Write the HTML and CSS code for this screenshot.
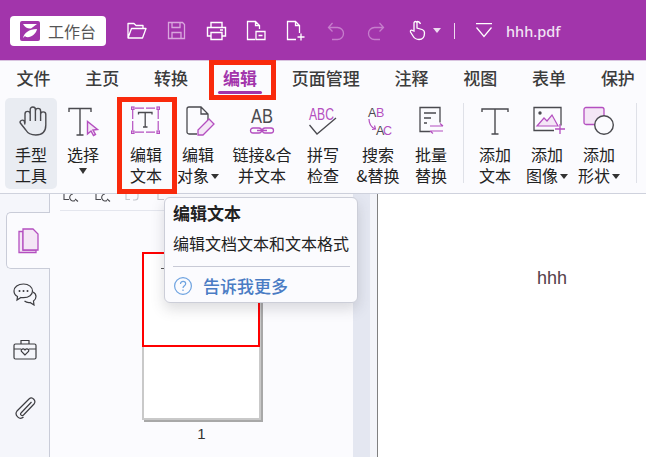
FILE: index.html
```html
<!DOCTYPE html>
<html lang="zh-CN">
<head>
    <meta charset="UTF-8">
    <title>hhh.pdf</title>
    <link rel="stylesheet" href="styles.css">
</head>
<body>
    <header class="titlebar">
        <div class="workbench">
            <svg class="logo" width="20" height="20" viewBox="0 0 20 20"><rect width="20" height="20" rx="2" fill="#a235ab"/><path d="M3 3h14l-6 4.500C8 8 5 6.500 3 3zM3 17c1-5 6-9 14-9-1 5-6 9-11 8l-1-1z" fill="#fff"/></svg>
            <span>工作台</span>
        </div>
        <div class="quick">
            <svg class="q-open" width="21" height="19" viewBox="0 0 21 19" fill="none" stroke="#fff" stroke-width="1.3"><path d="M2 17V2.500h6l2 2h7v3M2 17h14.500L20 7.500H5.500L2 17z" stroke-linejoin="round"/></svg>
            <svg class="q-save" width="19" height="19" viewBox="0 0 19 19" fill="none" stroke="#d9a6dd" stroke-width="1.3"><path d="M1.500 1.500h14l2 2v14h-16zM5 1.500v5h8v-5M5 17.500v-6h9v6"/></svg>
            <svg class="q-print" width="21" height="20" viewBox="0 0 21 20" fill="none" stroke="#fff" stroke-width="1.4"><path d="M5 6V1.500h11V6M5 15H1.500V6.500h18V15H16M5 11.500h11v7H5zM14 9h3"/></svg>
            <svg class="q-export" width="20" height="21" viewBox="0 0 20 21" fill="none" stroke="#fff" stroke-width="1.3"><path d="M9 19.500H1.500v-18h8l4 4V9M9.500 1.500v4h4M10 11.500h9v8h-9zM12.500 15.500h4"/></svg>
            <svg class="q-new" width="20" height="21" viewBox="0 0 20 21" fill="none" stroke="#fff" stroke-width="1.3"><path d="M10 19.500H1.500v-18h8l4 4V13M9.500 1.500v4h4M15 13.500v7M11.500 17h7"/></svg>
            <svg class="q-undo" width="18" height="20" viewBox="0 0 18 20" fill="none" stroke="#c67ecc" stroke-width="1.3"><path d="M1.500 6.500h9a6 6 0 0 1 0 12H5M5.500 2 1.500 6.500l4 4"/></svg>
            <svg class="q-redo" width="18" height="20" viewBox="0 0 18 20" fill="none" stroke="#c67ecc" stroke-width="1.3"><path d="M16.500 6.500h-9a6 6 0 0 0 0 12H13M12.500 2l4 4.500-4 4"/></svg>
            <svg class="q-hand" width="18" height="21" viewBox="0 0 18 21" fill="none" stroke="#fff" stroke-width="1.3"><path d="M6 11V3a1.500 1.500 0 0 1 3 0v5l5 1.500c2 .7 2.500 1.500 2.500 3.500 0 4-2 6.500-5.500 6.500-3 0-4.500-1-6-3.500l-2.500-4c-.5-1.500 1-2.500 2-1.500zM9 1.500c2 0 3 1 3.500 2.500"/></svg>
            <span class="caret caret-light"></span>
            <span class="q-sep"></span>
            <svg class="q-more" width="16" height="15" viewBox="0 0 16 15" fill="none" stroke="#fff" stroke-width="1.2"><path d="M0 .7h16M.5 4.500 8 13.500l7.500-9"/></svg>
            <span class="filename">hhh.pdf</span>
        </div>
    </header>

    <nav class="tabs">
        <span>文件</span>
        <span>主页</span>
        <span>转换</span>
        <span class="active">编辑</span>
        <span>页面管理</span>
        <span>注释</span>
        <span>视图</span>
        <span>表单</span>
        <span>保护</span>
    </nav>

    <section class="ribbon">
        <div class="tool tool-hand">
            <svg width="29" height="30" viewBox="0 0 29 30" fill="none" stroke="#4a4a4f" stroke-width="1.400" stroke-linejoin="round"><path d="M8 17V8a2.600 2.600 0 0 1 5.200 0v7M13.200 15V3.600a2.600 2.600 0 0 1 5.200 0V15M18.400 15V5a2.600 2.600 0 0 1 5.200 0v10M23.600 15V8.500a2.600 2.600 0 0 1 5.200 0V19c0 6.500-3.500 10-10 10-5.500 0-8-1.500-10-5l-5.500-7c-1-2 2-4 4-2L8 18.500"/></svg>
            <span>手型<br>工具</span>
        </div>
        <div class="tool">
            <svg width="30" height="30" viewBox="0 0 30 30" fill="none" stroke="#4a4a4f" stroke-width="1.4"><path d="M1 6V2.500h22V6M12 2.500V29M8.500 29h7"/><path d="M19.500 15.500V28l3.500-3 2.500 4.500 2-1-2.500-4.500 4.500-.5z" stroke="#b44fc0" fill="#f4e6f6"/></svg>
            <span>选择</span>
            <span class="caret"></span>
        </div>
        <div class="tool tool-text">
            <svg width="30" height="30" viewBox="0 0 30 30" fill="none"><path d="M4 2.200h21M4 26.200h21M1.700 4v20.500M27.200 4v20.500" stroke="#b44fc0" stroke-width="1.200" stroke-dasharray="9 2"/><path d="M7.500 8.500V6.500h13.500v2M14.200 6.500V21M12 21h4.500" stroke="#4a4a4f" stroke-width="1.300"/><g fill="#fbeffc" stroke="#b44fc0" stroke-width="1.200"><rect x=".6" y="1" width="2.400" height="2.400"/><rect x="26" y="1" width="2.400" height="2.400"/><rect x=".6" y="25" width="2.400" height="2.400"/><rect x="26" y="25" width="2.400" height="2.400"/></g></svg>
            <span>编辑<br>文本</span>
        </div>
        <div class="tool tool-object">
            <svg class="ico-shift" width="30" height="30" viewBox="0 0 30 30" fill="none" stroke="#4a4a4f" stroke-width="1.300"><path d="M12 28H4a2 2 0 0 1-2-2V3a2 2 0 0 1 2-2h12l7 7v6M16 1v7h7"/><path d="M13 29v-5l11-11 5 5-11 11z" stroke="#b44fc0" fill="#f4e6f6"/></svg>
            <span>编辑<br><span class="with-caret">对象</span></span>
        </div>
        <div class="tool tool-link">
            <svg width="26" height="30" viewBox="0 0 26 30" fill="none"><text x="2" y="17" textLength="22" lengthAdjust="spacingAndGlyphs" class="ico-label ico-label-dark">AB</text><path d="M10 23H4a2.500 2.500 0 0 0 0 5h6a2.500 2.500 0 0 0 0-5zM16 23h6a2.500 2.500 0 0 1 0 5h-6a2.500 2.500 0 0 1 0-5zM8 25.500h10" stroke="#b44fc0" stroke-width="1.300" transform="translate(0 -1)"/></svg>
            <span>链接&amp;合<br>并文本</span>
        </div>
        <div class="tool tool-check">
            <svg width="30" height="30" viewBox="0 0 30 30" fill="none"><text x="1" y="14" textLength="25" lengthAdjust="spacingAndGlyphs" class="ico-abc ico-label-purple">ABC</text><path d="M1.500 19 9 28l19-16" stroke="#4a4a4f" stroke-width="1.300"/></svg>
            <span>拼写<br>检查</span>
        </div>
        <div class="tool tool-search">
            <svg width="26" height="30" viewBox="0 0 26 30" fill="none"><text x="3" y="11" class="ico-small ico-label-dark">A</text><text x="11" y="11" class="ico-small ico-label-purple">B</text><text x="11" y="29" class="ico-small ico-label-dark">A</text><text x="18" y="29" class="ico-small ico-label-purple">C</text><path d="M4 13c0 5 2 8 6 10M7 23.500l3.500-.5-1-3.500" stroke="#b44fc0" stroke-width="1.200"/></svg>
            <span>搜索<br>&amp;替换</span>
        </div>
        <div class="tool tool-batch">
            <svg width="26" height="30" viewBox="0 0 26 30" fill="none"><path d="M12 25.500H2V1.500h20v15M6 7h12M6 12h7M6 17h3" stroke="#4a4a4f" stroke-width="1.300"/><path d="M12 20h13M22 17.500l3 2.500M25 25H12M15 27.500 12 25" stroke="#b44fc0" stroke-width="1.200"/></svg>
            <span>批量<br>替换</span>
        </div>
        <span class="ribbon-sep"></span>
        <div class="tool">
            <svg width="28" height="30" viewBox="0 0 28 30" fill="none" stroke="#4a4a4f" stroke-width="1.400"><path d="M1 6V3h26v3M14 3v25M10.500 28h7"/></svg>
            <span>添加<br>文本</span>
        </div>
        <div class="tool">
            <svg class="ico-shift" width="34" height="30" viewBox="0 0 34 30" fill="none"><path d="M22 24.500H2v-23h27v18" stroke="#4a4a4f" stroke-width="1.300"/><circle cx="8" cy="7" r="1.700" fill="#4a4a4f"/><path d="M5 20l7-8 3 3 5-6 6 11z" stroke="#b44fc0" stroke-width="1.200" fill="#f4e6f6"/><path d="M28 18v10M23 23h10" stroke="#b44fc0" stroke-width="1.300"/></svg>
            <span>添加<br><span class="with-caret">图像</span></span>
        </div>
        <div class="tool">
            <svg width="32" height="30" viewBox="0 0 32 30" fill="none"><rect x="1" y="1.500" width="20" height="17" rx="2" stroke="#b44fc0" stroke-width="1.300" fill="#f4e6f6"/><circle cx="21" cy="19" r="9.300" stroke="#4a4a4f" stroke-width="1.400" fill="#fbfbfe"/></svg>
            <span>添加<br><span class="with-caret">形状</span></span>
        </div>
        <span class="ribbon-sep"></span>
    </section>

    <main class="workspace">
        <aside class="sidebar">
            <div class="side-tab">
                <svg width="21" height="26" viewBox="0 0 21 26" fill="none" stroke="#b44fc0" stroke-width="1.300"><path d="M1 3.500h4v18.500h13v2.500H1z" fill="#f4e6f6"/><path d="M5 1h10l5 5v16H5z" fill="#f4e6f6"/></svg>
            </div>
            <svg class="side-icon" width="24" height="23" viewBox="0 0 24 23" fill="none" stroke="#3c3c40" stroke-width="1.200"><path d="M10.500 1C5 1 1 4 1 8c0 2.500 1.500 4.500 3.500 5.500L4 17l4-2.500c1 .2 1.500.2 2.500.2 5.500 0 9-3 9-6.700S16 1 10.500 1z"/><path d="M20 9c2 1 3 2.500 3 4.500s-1 3.500-2.500 4.500l.5 4-4-2.500c-2 .3-4-.3-5.500-1.500"/><path d="M6.500 8h.01M10.500 8h.01M14.500 8h.01" stroke-width="2" stroke-linecap="round"/></svg>
            <svg class="side-icon" width="24" height="21" viewBox="0 0 24 21" fill="none" stroke="#3c3c40" stroke-width="1.200"><rect x="1" y="5" width="22" height="15" rx="1.500"/><path d="M8 5V1.500h8V5M1 10h7M16 10h7M12 16l-3.500-3.500c-1.200-2 1.800-3.800 3.500-1.500 1.700-2.300 4.700-.5 3.500 1.500z"/></svg>
            <svg class="side-icon" width="22" height="24" viewBox="0 0 22 24" fill="none" stroke="#3c3c40" stroke-width="1.200"><path d="M17.500 7 7 18c-1.500 1.500 1 3.500 2.500 2L20 9c2.500-3-1.500-8-5-5L3 16c-3 4 2.500 9.500 6.500 6"/></svg>
        </aside>

        <section class="panel">
            <div class="panel-tools">
                <svg width="110" height="8" viewBox="0 0 110 8" fill="none" stroke="#4a4a4f" stroke-width="1.100"><path d="M4 0v5.500h5M13 0a3.500 3.500 0 1 0 2 6.500M15 5l3 2.500M36 0v5.500h5M45 0a3.500 3.500 0 1 0 2 6.500M47 5l3 2.500"/><path d="M66 0v5.500h4M78 0v3a3 3 0 0 1-3 3h-2M98 0v5.500h6" stroke="#c4c6cc"/></svg>
            </div>
            <div class="thumb-wrap">
                <div class="thumb">
                    <div class="thumb-mark"><i></i></div>
                </div>
                <span class="thumb-no">1</span>
            </div>
        </section>

        <div class="scroll-strip"></div>
        <div class="page-gap"></div>

        <section class="page">
            <span class="page-text">hhh</span>
        </section>
    </main>

    <div class="tooltip">
        <strong>编辑文本</strong>
        <p>编辑文档文本和文本格式</p>
        <hr>
        <a>
            <svg width="20" height="20" viewBox="0 0 20 20" fill="none" stroke="#6ea3e0" stroke-width="1.200"><circle cx="10" cy="10" r="8.400"/><path d="M7.500 8c0-3.500 5.200-3.200 5.200-.2 0 2-2.700 2-2.700 4.200M10 13.500v1.500"/></svg>
            告诉我更多
        </a>
    </div>

    <div class="mark mark-tab"></div>
    <div class="mark mark-tool"></div>
</body>
</html>
```

FILE: styles.css
```css
html, body {
    margin: 0;
    height: 100%;
}
body {
    position: relative;
    width: 646px;
    height: 457px;
    overflow: hidden;
    display: flex;
    flex-direction: column;
    background-color: #fbfbfe;
    font-family: "Noto Sans CJK SC", "Noto Sans", sans-serif;
    color: #222;
}

/* title bar */
.titlebar {
    flex: none;
    height: 61px;
    display: flex;
    align-items: center;
    background-color: #a235ab;
    border-bottom: 1px solid #d9c4e0;
    box-sizing: border-box;
}
.workbench {
    margin-left: 10px;
    margin-top: 2px;
    width: 96px;
    height: 30px;
    box-sizing: border-box;
    padding-left: 10px;
    display: flex;
    align-items: center;
    gap: 8px;
    background-color: #fff;
    border-radius: 4px;
    font-size: 16px;
    color: #555;
}
.quick {
    display: flex;
    align-items: center;
    margin-top: 1px;
}
.q-open { margin-left: 20px; }
.q-save { margin-left: 20px; }
.q-print { margin-left: 20px; }
.q-export { margin-left: 19px; }
.q-new { margin-left: 20px; }
.q-undo { margin-left: 21px; }
.q-redo { margin-left: 22px; }
.q-hand { margin-left: 23px; }
.caret {
    width: 0;
    height: 0;
    border-left: 4.5px solid transparent;
    border-right: 4.5px solid transparent;
    border-top: 6px solid #333;
}
.caret-light {
    margin-left: 7px;
    border-left-width: 4px;
    border-right-width: 4px;
    border-top: 5px solid #eedcf0;
}
.q-sep {
    margin-left: 13px;
    width: 1px;
    height: 16px;
    background-color: #eedcf0;
}
.q-more { margin-left: 21px; }
.filename {
    margin-left: 14px;
    font-family: "Noto Sans", sans-serif;
    font-size: 14.500px;
    font-weight: 500;
    color: #f1e4f4;
}

/* tabs */
.tabs {
    flex: none;
    height: 31px;
    box-sizing: border-box;
    padding: 2px 0 0 16.500px;
    display: flex;
    align-items: center;
    gap: 34.800px;
    font-size: 17px;
    font-weight: 500;
    color: #3c3c3c;
    white-space: nowrap;
}
.tabs .active {
    position: relative;
    color: #a235ab;
    font-weight: 700;
}
.tabs .active::after {
    content: "";
    position: absolute;
    left: -5px;
    right: -5px;
    bottom: -4px;
    height: 3px;
    border-radius: 2px;
    background-color: #a235ab;
}

/* ribbon */
.ribbon {
    flex: none;
    height: 102px;
    box-sizing: border-box;
    padding: 6px 0 0 5px;
    display: flex;
    align-items: flex-start;
    border-bottom: 1px solid #cfd2dd;
}
.tool {
    width: 52px;
    height: 91px;
    box-sizing: border-box;
    padding-top: 8px;
    flex: none;
    display: flex;
    flex-direction: column;
    align-items: center;
    font-size: 16px;
    line-height: 21px;
    text-align: center;
    color: #222;
    white-space: nowrap;
}
.tool svg {
    flex: none;
    margin-bottom: 8px;
    overflow: visible;
}
.tool .ico-shift { margin-left: 4px; }
.tool-hand {
    background-color: #e9ecf2;
    border-radius: 5px;
}
.tool-text { margin-left: 11px; }
.tool-link { width: 76px; }
.tool-check { width: 46px; }
.tool-search { width: 64px; }
.tool-batch { width: 42px; }
.tool .caret { margin-top: 3px; }
.with-caret::after {
    content: "";
    display: inline-block;
    vertical-align: 3px;
    margin-left: 2px;
    border-left: 4.500px solid transparent;
    border-right: 4.500px solid transparent;
    border-top: 5px solid #333;
}
.ribbon-sep {
    flex: none;
    width: 1px;
    height: 80px;
    margin: 5px 5px 0 11px;
    background-color: #dfe1e8;
}
.ico-label {
    font-family: "Liberation Sans", sans-serif;
    font-size: 20px;
}
.ico-abc {
    font-family: "Liberation Sans", sans-serif;
    font-size: 17px;
}
.ico-small {
    font-family: "Liberation Sans", sans-serif;
    font-size: 12.500px;
}
.ico-label-dark { fill: #4a4a4f; }
.ico-label-purple { fill: #b44fc0; }

/* workspace */
.workspace {
    flex: 1;
    min-height: 0;
    display: flex;
}
.sidebar {
    flex: none;
    width: 49px;
    display: flex;
    flex-direction: column;
    align-items: center;
    background-color: #f5f6fb;
    border-right: 1px solid #c9ccd8;
}
.side-tab {
    align-self: flex-end;
    width: 43px;
    height: 55px;
    margin-top: 18px;
    margin-right: -1px;
    display: flex;
    align-items: center;
    justify-content: center;
    background-color: #fbfbfe;
    border: 1px solid #c9ccd8;
    border-right: 0;
    border-radius: 5px 0 0 5px;
}
.side-icon {
    flex: none;
    margin: 33px 0 0 1px;
}
.side-icon:last-child { margin-top: 35px; }
.side-tab + .side-icon { margin-top: 14px; }
.panel {
    flex: none;
    width: 303px;
    display: flex;
    flex-direction: column;
    align-items: center;
}
.panel-tools {
    align-self: stretch;
    height: 16px;
    margin-left: 10px;
    border-bottom: 1px solid #e4e6ee;
    line-height: 0;
}
.thumb-wrap {
    margin-top: 41px;
    display: flex;
    flex-direction: column;
    align-items: center;
}
.thumb {
    width: 119px;
    height: 168px;
    box-sizing: border-box;
    background-color: #fff;
    border: 2px solid #c9c9c9;
    box-shadow: 2px 2px 0 #a8a8a8;
}
.thumb-mark {
    margin: -2px -1px 0 -2px;
    height: 95px;
    box-sizing: border-box;
    border: 2px solid #f00;
}
.thumb-mark i {
    display: block;
    width: 4px;
    height: 1px;
    margin: 14px 0 0 17px;
    background-color: #555;
}
.thumb-no {
    margin-top: 5px;
    font-family: "Liberation Sans", sans-serif;
    font-size: 15px;
    line-height: 18px;
    color: #333;
}
.scroll-strip {
    flex: none;
    width: 17px;
    background-color: #e4e7f1;
}
.page-gap {
    flex: none;
    width: 7px;
    background-color: #f3f4f9;
    border-right: 1px solid #808080;
}
.page {
    flex: 1;
    background-color: #fff;
}
.page-text {
    display: block;
    margin: 73px 0 0 159px;
    font-family: "Liberation Sans", sans-serif;
    font-size: 18px;
    line-height: 22px;
    color: #55404a;
}

/* tooltip */
.tooltip {
    position: absolute;
    left: 164px;
    top: 197px;
    width: 194px;
    height: 106px;
    box-sizing: border-box;
    padding: 4px 7px 0 8px;
    background-color: #fbfbfe;
    border: 1px solid #ccced8;
    border-radius: 6px;
    box-shadow: 0 6px 14px rgba(60, 60, 70, 0.18);
}
.tooltip strong {
    display: block;
    font-size: 17px;
    line-height: 22px;
}
.tooltip p {
    margin: 8px 0 0;
    font-size: 16px;
    line-height: 22px;
    white-space: nowrap;
}
.tooltip hr {
    margin: 12px 0 0;
    border: 0;
    border-top: 1px solid #c8cad6;
}
.tooltip a {
    margin-top: 7px;
    display: flex;
    align-items: center;
    gap: 10px;
    font-size: 17px;
    font-weight: 500;
    line-height: 24px;
    color: #4a7cc4;
}

/* red annotation boxes */
.mark {
    position: absolute;
    box-sizing: border-box;
    border: 5px solid #f92a0c;
}
.mark-tab {
    left: 209px;
    top: 60px;
    width: 67px;
    height: 40px;
}
.mark-tool {
    left: 117px;
    top: 97px;
    width: 60px;
    height: 97px;
}
```
